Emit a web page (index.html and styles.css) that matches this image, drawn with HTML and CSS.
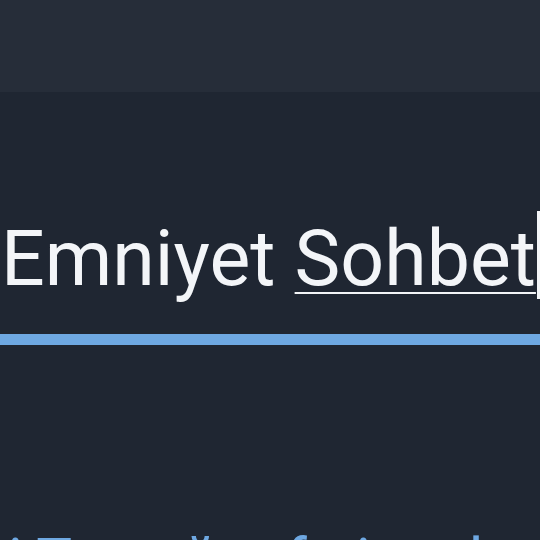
FILE: index.html
```html
<!DOCTYPE html>
<html lang="tr">
<head>
<meta charset="utf-8">
<link rel="stylesheet" href="styles.css">
</head>
<body>
<div class="screen">
  <header class="topbar">
    <h1 class="title">Editör</h1>
  </header>
  <section class="field">
    <div class="input-line"><span class="word">Emniyet </span><span class="composing">Sohbet</span><span class="caret"></span></div>
    <div class="focus-bar"></div>
  </section>
  <div class="section-label">i Tonıağ arfo innel</div>
</div>
</body>
</html>
```

FILE: styles.css
```css
html, body {
  margin: 0;
  padding: 0;
  background: #1f2632;
}
.screen {
  width: 540px;
  height: 540px;
  overflow: hidden;
  background: #1f2632;
  font-family: Roboto, "Noto Sans", sans-serif;
}
.topbar {
  height: 92px;
  background: #262d39;
  overflow: hidden;
}
.title {
  margin: -75px 0 0 -3px;
  font-size: 80px;
  line-height: 90px;
  font-weight: 400;
  color: #eef1f5;
  white-space: nowrap;
}
.field {
  padding-top: 122px;
}
.input-line {
  display: flex;
  align-items: flex-start;
  height: 90px;
  margin-left: 1px;
  font-size: 77px;
  line-height: 90px;
  color: #f3f5f8;
  white-space: pre;
}
.composing {
  text-decoration: underline;
  text-decoration-thickness: 2px;
  text-underline-offset: 7px;
}
.caret {
  width: 3px;
  height: 88px;
  margin-top: -3px;
  margin-left: 1px;
  background: #f3f5f8;
}
.focus-bar {
  margin-top: 30px;
  height: 11px;
  background: #6ea8e2;
}
.section-label {
  margin-top: 170px;
  padding-left: 8px;
  font-size: 60px;
  line-height: 90px;
  color: #6ea8e2;
  white-space: nowrap;
}
```
